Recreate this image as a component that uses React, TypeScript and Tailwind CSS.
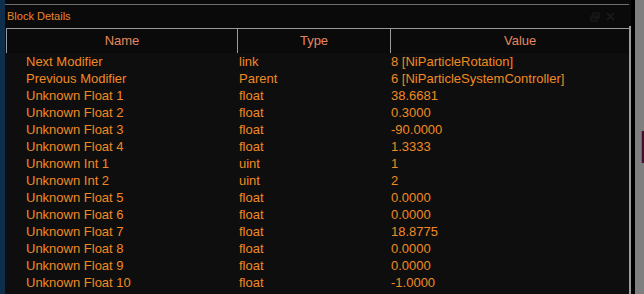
import React from 'react';

const rows: [string, string, string][] = [
  ['Next Modifier', 'link', '8 [NiParticleRotation]'],
  ['Previous Modifier', 'Parent', '6 [NiParticleSystemController]'],
  ['Unknown Float 1', 'float', '38.6681'],
  ['Unknown Float 2', 'float', '0.3000'],
  ['Unknown Float 3', 'float', '-90.0000'],
  ['Unknown Float 4', 'float', '1.3333'],
  ['Unknown Int 1', 'uint', '1'],
  ['Unknown Int 2', 'uint', '2'],
  ['Unknown Float 5', 'float', '0.0000'],
  ['Unknown Float 6', 'float', '0.0000'],
  ['Unknown Float 7', 'float', '18.8775'],
  ['Unknown Float 8', 'float', '0.0000'],
  ['Unknown Float 9', 'float', '0.0000'],
  ['Unknown Float 10', 'float', '-1.0000'],
];

const App: React.FC = () => {
  return (
    <div
      className="w-[644px] h-[294px] flex overflow-hidden bg-[#0b0b0b]"
      style={{ fontFamily: '"Liberation Sans", Arial, sans-serif' }}
    >
      {/* dock edge */}
      <div className="w-[5px] shrink-0 bg-[#0f2e4c]" />

      {/* panel */}
      <div className="w-[624px] shrink-0 flex flex-col">
        <div className="h-[4px] bg-[#0a0a0a]" />
        <div className="h-px bg-[#6e6e6e]" />
        <div className="h-[23px] flex items-center justify-between pl-[2px] pr-[14px] bg-[#0a0a0a]">
          <span className="text-[11px] text-[#e8862a]">Block Details</span>
          <div className="flex items-center gap-[6px] text-[#1c1c1c]">
            <svg width="10" height="10" viewBox="0 0 10 10" fill="none" stroke="currentColor" strokeWidth="1.2">
              <rect x="3" y="1" width="6" height="5" />
              <rect x="1" y="4" width="6" height="5" />
            </svg>
            <svg width="9" height="9" viewBox="0 0 9 9" stroke="currentColor" strokeWidth="1.4">
              <line x1="1" y1="1" x2="8" y2="8" />
              <line x1="8" y1="1" x2="1" y2="8" />
            </svg>
          </div>
        </div>

        {/* table */}
        <div className="flex-1 pl-px bg-[#0e0e0e]">
          <div className="flex h-[25px] border-t border-l border-[#9a9a9a] bg-[#0a0a0a] text-[13px] text-[#e5875e]">
            <div className="w-[231px] flex items-center justify-center border-r border-[#9a9a9a]">Name</div>
            <div className="w-[153px] flex items-center justify-center border-r border-[#9a9a9a]">Type</div>
            <div className="flex-1 flex items-center pl-[113px]">Value</div>
          </div>
          <div className="text-[13px] text-[#f08a24]">
            {rows.map(([name, type, value]) => (
              <div key={name} className="flex h-[17px] items-center leading-none">
                <div className="w-[232px] pl-[20px]">{name}</div>
                <div className="w-[153px] pl-px">{type}</div>
                <div className="flex-1 whitespace-nowrap">{value}</div>
              </div>
            ))}
          </div>
        </div>
      </div>

      {/* scroll edge */}
      <div className="w-[2px] shrink-0 flex flex-col">
        <div className="h-[26px] bg-[#0a0a0a]" />
        <div className="flex-1 bg-[#9a9a9a]" />
      </div>
      <div className="w-[4px] shrink-0 bg-black" />
      <div className="flex-1 bg-[#7f7f7f] flex flex-col">
        <div className="h-[131px]" />
        <div className="ml-[6px] h-[32px] bg-[#4a0c2c] border-l border-[#9a4a78]" />
      </div>
    </div>
  );
};

export default App;
